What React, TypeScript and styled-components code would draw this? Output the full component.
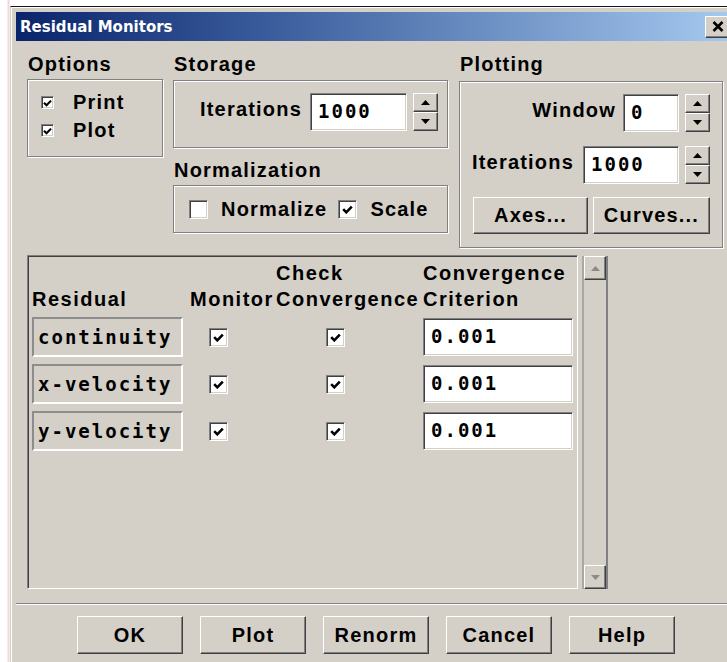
import React from "react";
import styled, { createGlobalStyle, css } from "styled-components";

const FACE = "#d4d0c8";
const SHADOW = "#808080";
const DARK = "#404040";

const GlobalStyle = createGlobalStyle`
  html, body {
    margin: 0;
    padding: 0;
    background: #fff;
    overflow: hidden;
  }
  body {
    font-family: "Liberation Sans", Arial, sans-serif;
    color: #000;
  }
`;

const raised = css`
  box-sizing: border-box;
  background: ${FACE};
  border: 1px solid;
  border-color: #fff ${DARK} ${DARK} #fff;
  box-shadow: inset -1px -1px 0 ${SHADOW};
`;

const sunken = css`
  box-sizing: border-box;
  border: 1px solid;
  border-color: ${SHADOW} #fff #fff ${SHADOW};
  box-shadow: inset 1px 1px 0 ${DARK}, inset -1px -1px 0 ${FACE};
`;

const etched = css`
  box-sizing: border-box;
  border: 1px solid ${SHADOW};
  box-shadow: inset 1px 1px 0 #fff, 1px 1px 0 #fff;
`;

const boldText = css`
  font-family: "Liberation Sans", Arial, sans-serif;
  font-weight: bold;
  font-size: 20px;
  letter-spacing: 1.2px;
  white-space: nowrap;
`;

const monoText = css`
  font-family: "DejaVu Sans Mono", "Liberation Mono", monospace;
  font-weight: bold;
  font-size: 19px;
  letter-spacing: 2px;
  white-space: nowrap;
`;

const Screen = styled.div`
  display: flex;
  width: 727px;
  height: 662px;
  overflow: hidden;
  background: #fff;
`;

const Desk = styled.div`
  flex: 0 0 10px;
  background: linear-gradient(90deg, #fff 0, #fff 7px, #efd6d6 8px, #e6dede 9px, #fff 10px);
`;

const Dialog = styled.div`
  flex: 0 0 731px;
  box-sizing: border-box;
  height: 700px;
  margin-top: 6px;
  padding: 5px 5px 0 5px;
  display: flex;
  flex-direction: column;
  background: ${FACE};
  border-top: 1px solid #161616;
  border-left: 1px solid ${FACE};
  box-shadow: inset 1px 1px 0 #fff;
`;

const TitleBar = styled.div`
  height: 29px;
  flex: 0 0 29px;
  display: flex;
  align-items: center;
  justify-content: space-between;
  padding: 0 5px 0 4px;
  background: linear-gradient(90deg, #0a246a 0%, #3a5c9c 35%, #a6caf0 100%);
`;

const TitleText = styled.span`
  font-family: "DejaVu Sans", Verdana, sans-serif;
  font-weight: bold;
  font-size: 15px;
  color: #fff;
`;

const CloseButton = styled.div`
  ${raised};
  width: 26px;
  height: 22px;
  display: flex;
  align-items: center;
  justify-content: center;
`;

const Body = styled.div`
  display: flex;
  flex-direction: column;
  padding: 12px 13px 0 11px;
`;

const TopRow = styled.div`
  display: flex;
  align-items: flex-start;
`;

const Column = styled.div<{ $width: number; $gap?: number }>`
  width: ${(p) => p.$width}px;
  margin-left: ${(p) => p.$gap ?? 0}px;
  display: flex;
  flex-direction: column;
`;

const GroupLabel = styled.div<{ $top?: number }>`
  ${boldText};
  height: 22px;
  line-height: 22px;
  margin: ${(p) => p.$top ?? 0}px 0 4px 1px;
`;

const OptionsBox = styled.div`
  ${etched};
  height: 78px;
  padding: 15px 0 0 13px;
  display: flex;
  flex-direction: column;
  gap: 13px;
`;

const CheckRow = styled.label<{ $gap: number }>`
  display: flex;
  align-items: center;
  gap: ${(p) => p.$gap}px;
  ${boldText};
  line-height: 15px;
`;

const CheckBox = styled.span<{ $size: number }>`
  ${sunken};
  width: ${(p) => p.$size}px;
  height: ${(p) => p.$size}px;
  flex: 0 0 auto;
  background: #fff;
  display: flex;
  align-items: center;
  justify-content: center;
`;

const StorageBox = styled.div`
  ${etched};
  height: 68px;
  margin-top: 1px;
  padding: 12px 0 0 26px;
  display: flex;
  align-items: flex-start;
`;

const FieldLabel = styled.span<{ $gap: number }>`
  ${boldText};
  line-height: 22px;
  margin: 5px ${(p) => p.$gap}px 0 0;
`;

const Field = styled.div<{ $width: number; $height?: number }>`
  ${sunken};
  ${monoText};
  width: ${(p) => p.$width}px;
  height: ${(p) => p.$height ?? 38}px;
  background: #fff;
  padding: 6px 0 0 7px;
`;

const Spinner = styled.div`
  width: 25px;
  height: 38px;
  margin-left: 6px;
  display: flex;
  flex-direction: column;
`;

const SpinButton = styled.div`
  ${raised};
  flex: 1;
  display: flex;
  align-items: center;
  justify-content: center;
`;

const NormBox = styled.div`
  ${etched};
  height: 48px;
  padding: 0 0 0 15px;
  display: flex;
  align-items: center;
`;

const PlotBox = styled.div`
  ${etched};
  height: 167px;
  margin-top: 2px;
  padding: 12px 12px 0 14px;
  display: flex;
  flex-direction: column;
  align-items: flex-end;
`;

const SpinRow = styled.div<{ $top?: number }>`
  display: flex;
  align-items: flex-start;
  margin-top: ${(p) => p.$top ?? 0}px;
`;

const ButtonRow = styled.div`
  display: flex;
  gap: 5px;
  margin-top: 13px;
`;

const PushButton = styled.button<{ $width: number; $height: number }>`
  ${raised};
  ${boldText};
  width: ${(p) => p.$width}px;
  height: ${(p) => p.$height}px;
  padding: 0;
  color: #000;
  cursor: default;
`;

const TableArea = styled.div`
  display: flex;
  margin-top: 7px;
`;

const Panel = styled.div`
  ${sunken};
  width: 551px;
  height: 334px;
  padding: 4px 0 0 4px;
  display: flex;
  flex-direction: column;
`;

const GridRow = styled.div<{ $header?: boolean }>`
  display: grid;
  grid-template-columns: 158px 86px 147px 150px;
  align-items: ${(p) => (p.$header ? "end" : "center")};
  height: ${(p) => (p.$header ? 52 : 40)}px;
  margin-bottom: ${(p) => (p.$header ? 5 : 7)}px;
`;

const HeadCell = styled.div`
  ${boldText};
  letter-spacing: 1.5px;
  line-height: 26px;
  white-space: pre;
`;

const NameCell = styled.div`
  ${monoText};
  box-sizing: border-box;
  width: 151px;
  height: 40px;
  padding: 7px 0 0 4px;
  border: 2px solid;
  border-color: #8c8c8c #fff #fff #8c8c8c;
`;

const CheckCell = styled.div<{ $inset: number }>`
  padding-left: ${(p) => p.$inset}px;
  display: flex;
`;

const ScrollBar = styled.div`
  width: 26px;
  height: 333px;
  margin: 1px 0 0 4px;
  box-sizing: border-box;
  border-left: 2px solid #a8a8a8;
  border-right: 2px solid ${SHADOW};
  display: flex;
  flex-direction: column;
  justify-content: space-between;
`;

const ScrollButton = styled.div`
  ${raised};
  height: 24px;
  display: flex;
  align-items: center;
  justify-content: center;
`;

const Separator = styled.div`
  margin-top: 14px;
  height: 1px;
  background: ${SHADOW};
  border-bottom: 1px solid #fff;
`;

const Footer = styled.div`
  display: flex;
  justify-content: center;
  gap: 17px;
  padding-top: 11px;
`;

const Arrow = ({ up, color = "#000" }: { up?: boolean; color?: string }) => (
  <svg width="9" height="5" viewBox="0 0 9 5">
    <polygon points={up ? "0,5 9,5 4.5,0" : "0,0 9,0 4.5,5"} fill={color} />
  </svg>
);

const Tick = ({ size, checked }: { size: number; checked: boolean }) => (
  <CheckBox $size={size}>
    {checked && (
      <svg width={size > 15 ? 11 : 9} height={size > 15 ? 9 : 8} viewBox="0 0 11 9">
        <path d="M1.2 4.2 L4.3 7.3 L9.8 1.6" stroke="#000" strokeWidth="2.6" fill="none" />
      </svg>
    )}
  </CheckBox>
);

const Spin = () => (
  <Spinner>
    <SpinButton>
      <Arrow up />
    </SpinButton>
    <SpinButton>
      <Arrow />
    </SpinButton>
  </Spinner>
);

const residuals = ["continuity", "x-velocity", "y-velocity"];

export default function App() {
  return (
    <Screen>
      <GlobalStyle />
      <Desk />
      <Dialog>
        <TitleBar>
          <TitleText>Residual Monitors</TitleText>
          <CloseButton>
            <svg width="12" height="11" viewBox="0 0 12 11">
              <path d="M1.5 1 L10.5 10 M10.5 1 L1.5 10" stroke="#000" strokeWidth="2.6" />
            </svg>
          </CloseButton>
        </TitleBar>

        <Body>
          <TopRow>
            <Column $width={136}>
              <GroupLabel>Options</GroupLabel>
              <OptionsBox>
                <CheckRow $gap={19}>
                  <Tick size={13} checked />
                  Print
                </CheckRow>
                <CheckRow $gap={19}>
                  <Tick size={13} checked />
                  Plot
                </CheckRow>
              </OptionsBox>
            </Column>

            <Column $width={275} $gap={10}>
              <GroupLabel>Storage</GroupLabel>
              <StorageBox>
                <FieldLabel $gap={8}>Iterations</FieldLabel>
                <Field $width={97}>1000</Field>
                <Spin />
              </StorageBox>
              <GroupLabel $top={11}>Normalization</GroupLabel>
              <NormBox>
                <CheckRow $gap={13}>
                  <Tick size={19} checked={false} />
                  Normalize
                </CheckRow>
                <CheckRow $gap={13} style={{ marginLeft: 11 }}>
                  <Tick size={19} checked />
                  Scale
                </CheckRow>
              </NormBox>
            </Column>

            <Column $width={264} $gap={11}>
              <GroupLabel>Plotting</GroupLabel>
              <PlotBox>
                <SpinRow>
                  <FieldLabel $gap={7}>Window</FieldLabel>
                  <Field $width={56}>0</Field>
                  <Spin />
                </SpinRow>
                <SpinRow $top={14}>
                  <FieldLabel $gap={9}>Iterations</FieldLabel>
                  <Field $width={96}>1000</Field>
                  <Spin />
                </SpinRow>
                <ButtonRow>
                  <PushButton $width={115} $height={37}>Axes...</PushButton>
                  <PushButton $width={117} $height={37}>Curves...</PushButton>
                </ButtonRow>
              </PlotBox>
            </Column>
          </TopRow>

          <TableArea>
            <Panel>
              <GridRow $header>
                <HeadCell>Residual</HeadCell>
                <HeadCell>Monitor</HeadCell>
                <HeadCell>{"Check\nConvergence"}</HeadCell>
                <HeadCell>{"Convergence\nCriterion"}</HeadCell>
              </GridRow>
              {residuals.map((name) => (
                <GridRow key={name}>
                  <NameCell>{name}</NameCell>
                  <CheckCell $inset={19}>
                    <Tick size={19} checked />
                  </CheckCell>
                  <CheckCell $inset={50}>
                    <Tick size={19} checked />
                  </CheckCell>
                  <Field $width={150}>0.001</Field>
                </GridRow>
              ))}
            </Panel>
            <ScrollBar>
              <ScrollButton>
                <Arrow up color="#8a8a8a" />
              </ScrollButton>
              <ScrollButton>
                <Arrow color="#8a8a8a" />
              </ScrollButton>
            </ScrollBar>
          </TableArea>
        </Body>

        <Separator />
        <Footer>
          {["OK", "Plot", "Renorm", "Cancel", "Help"].map((label) => (
            <PushButton key={label} $width={106} $height={38}>
              {label}
            </PushButton>
          ))}
        </Footer>
      </Dialog>
    </Screen>
  );
}
